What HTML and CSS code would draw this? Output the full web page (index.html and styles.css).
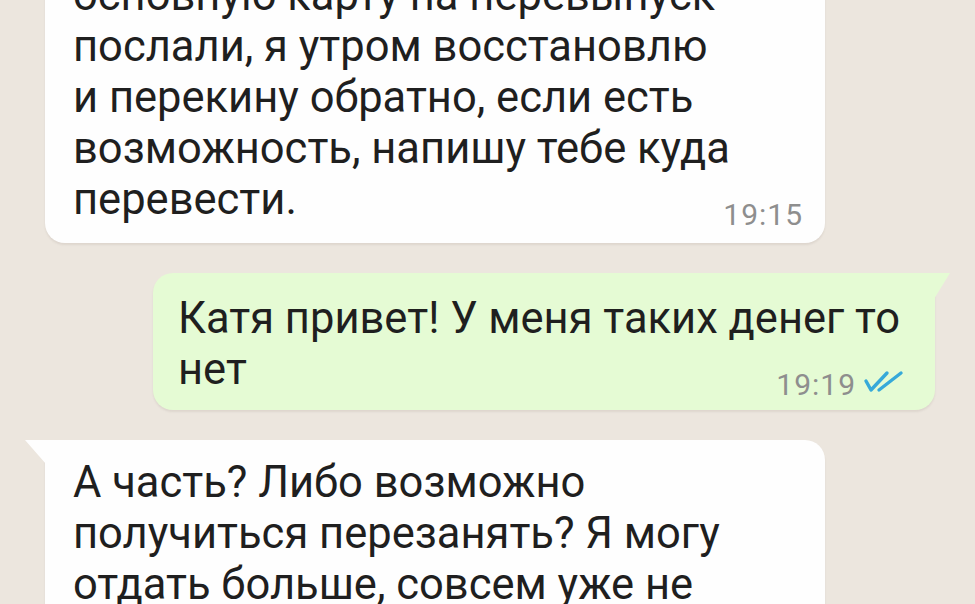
FILE: index.html
```html
<!DOCTYPE html>
<html lang="ru">
<head>
<meta charset="utf-8">
<link rel="stylesheet" href="styles.css">
</head>
<body>
<div class="chat">
  <div class="msg msg-in msg-first">
    <div class="bubble bubble-in">
      <div class="text">основную карту на перевыпуск<br>послали, я утром восстановлю<br>и перекину обратно, если есть<br>возможность, напишу тебе куда<br>перевести.</div>
      <div class="meta">19:15</div>
    </div>
  </div>
  <div class="msg msg-out">
    <div class="bubble bubble-out tail-out">
      <div class="text">Катя привет! У меня таких денег то<br>нет</div>
      <div class="meta">19:19<svg class="ticks" width="44" height="26" viewBox="0 0 44 26"><path d="M5 11 L10 20 L26 3 M18 20 L40 3" fill="none" stroke="#36a9d9" stroke-width="3.4" stroke-linecap="round" stroke-linejoin="round"/></svg></div>
    </div>
  </div>
  <div class="msg msg-in">
    <div class="bubble bubble-in tail-in">
      <div class="text">А часть? Либо возможно<br>получиться перезанять? Я могу<br>отдать больше, совсем уже не</div>
    </div>
  </div>
</div>
</body>
</html>
```
FILE: styles.css
```css
html, body {
  margin: 0;
  padding: 0;
}
body {
  width: 975px;
  height: 604px;
  overflow: hidden;
  background: #ece6de;
  font-family: Roboto, "Noto Sans", sans-serif;
  color: #1f1f1f;
}
.chat {
  display: flex;
  flex-direction: column;
  gap: 30px;
}
.msg {
  display: flex;
}
.msg-first {
  margin-top: -50px;
}
.msg-in {
  padding-left: 45px;
}
.msg-out {
  padding-left: 153px;
}
.bubble {
  position: relative;
  display: flex;
  flex-direction: column;
  width: 780px;
  box-sizing: border-box;
  border-radius: 20px;
  box-shadow: 0 2px 2px rgba(120, 110, 100, 0.12);
}
.bubble-in {
  background: #fefefe;
  padding: 20px 22px 13px 28px;
}
.bubble-out {
  width: 782px;
  background: #e5fbd4;
  padding: 20px 30px 10px 25px;
}
.tail-in {
  border-top-left-radius: 0;
  padding-top: 17px;
}
.tail-in::before {
  content: "";
  position: absolute;
  left: -20px;
  top: 0;
  width: 21px;
  height: 24px;
  background: #fefefe;
  clip-path: polygon(0 0, 100% 0, 100% 100%);
}
.tail-out {
  border-top-right-radius: 0;
}
.tail-out::after {
  content: "";
  position: absolute;
  right: -15px;
  top: 0;
  width: 16px;
  height: 26px;
  background: #e5fbd4;
  clip-path: polygon(0 0, 100% 0, 0 100%);
}
.text {
  font-size: 43.5px;
  line-height: 51px;
  white-space: nowrap;
}
.meta {
  align-self: flex-end;
  display: flex;
  align-items: flex-end;
  gap: 5px;
  margin-top: -25px;
  font-size: 30px;
  line-height: 30px;
  letter-spacing: 1px;
  color: #8e8e8e;
  white-space: nowrap;
}
.ticks {
  display: block;
  margin-bottom: 4px;
}
```
